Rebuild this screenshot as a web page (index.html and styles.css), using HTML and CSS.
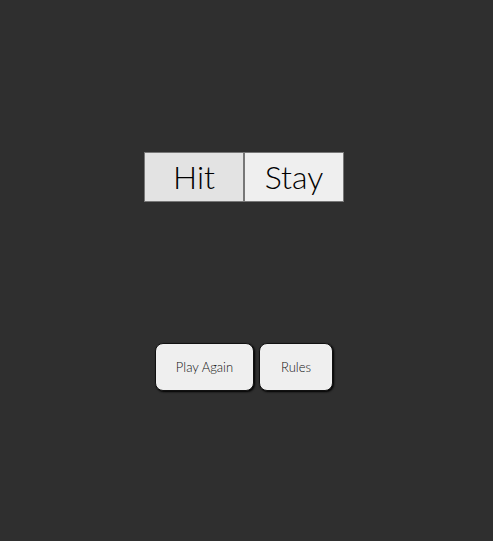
FILE: index.html
```html
<!DOCTYPE html>
<html>
<head>
<meta charset="utf-8">
<link rel="stylesheet" href="styles.css">
</head>
<body>
<div class="page">
  <div class="actions">
    <button class="big hit">Hit</button>
    <button class="big stay">Stay</button>
  </div>
  <div class="controls">
    <button class="small play">Play Again</button>
    <button class="small rules">Rules</button>
  </div>
</div>
</body>
</html>
```
FILE: styles.css
```css
html, body {
  margin: 0;
  padding: 0;
  background: #2f2f2f;
  width: 493px;
  height: 541px;
  overflow: hidden;
}
.page {
  display: flex;
  flex-direction: column;
  align-items: flex-start;
  font-family: Lato, "Open Sans", sans-serif;
}
.actions {
  display: flex;
  gap: 0;
  margin-top: 152px;
  margin-left: 144px;
}
.big {
  box-sizing: border-box;
  width: 100px;
  height: 50px;
  border: 1px solid #777;
  font-family: Lato, sans-serif;
  font-weight: 300;
  font-size: 32px;
  color: #000;
  padding: 0 0 2px;
  margin: 0;
  border-radius: 0;
}
.hit { background: #e3e3e3; }
.stay { background: #efefef; }
.controls {
  display: flex;
  gap: 5px;
  margin-top: 141px;
  margin-left: 155px;
}
.small {
  box-sizing: border-box;
  height: 48px;
  border: 1px solid #111;
  border-radius: 8px;
  background: #efefef;
  box-shadow: 1px 1px 2px #000;
  font-family: Lato, sans-serif;
  font-weight: 300;
  font-size: 13px;
  color: #111;
  padding: 0;
  margin: 0;
}
.play { width: 99px; }
.rules { width: 74px; }
```
